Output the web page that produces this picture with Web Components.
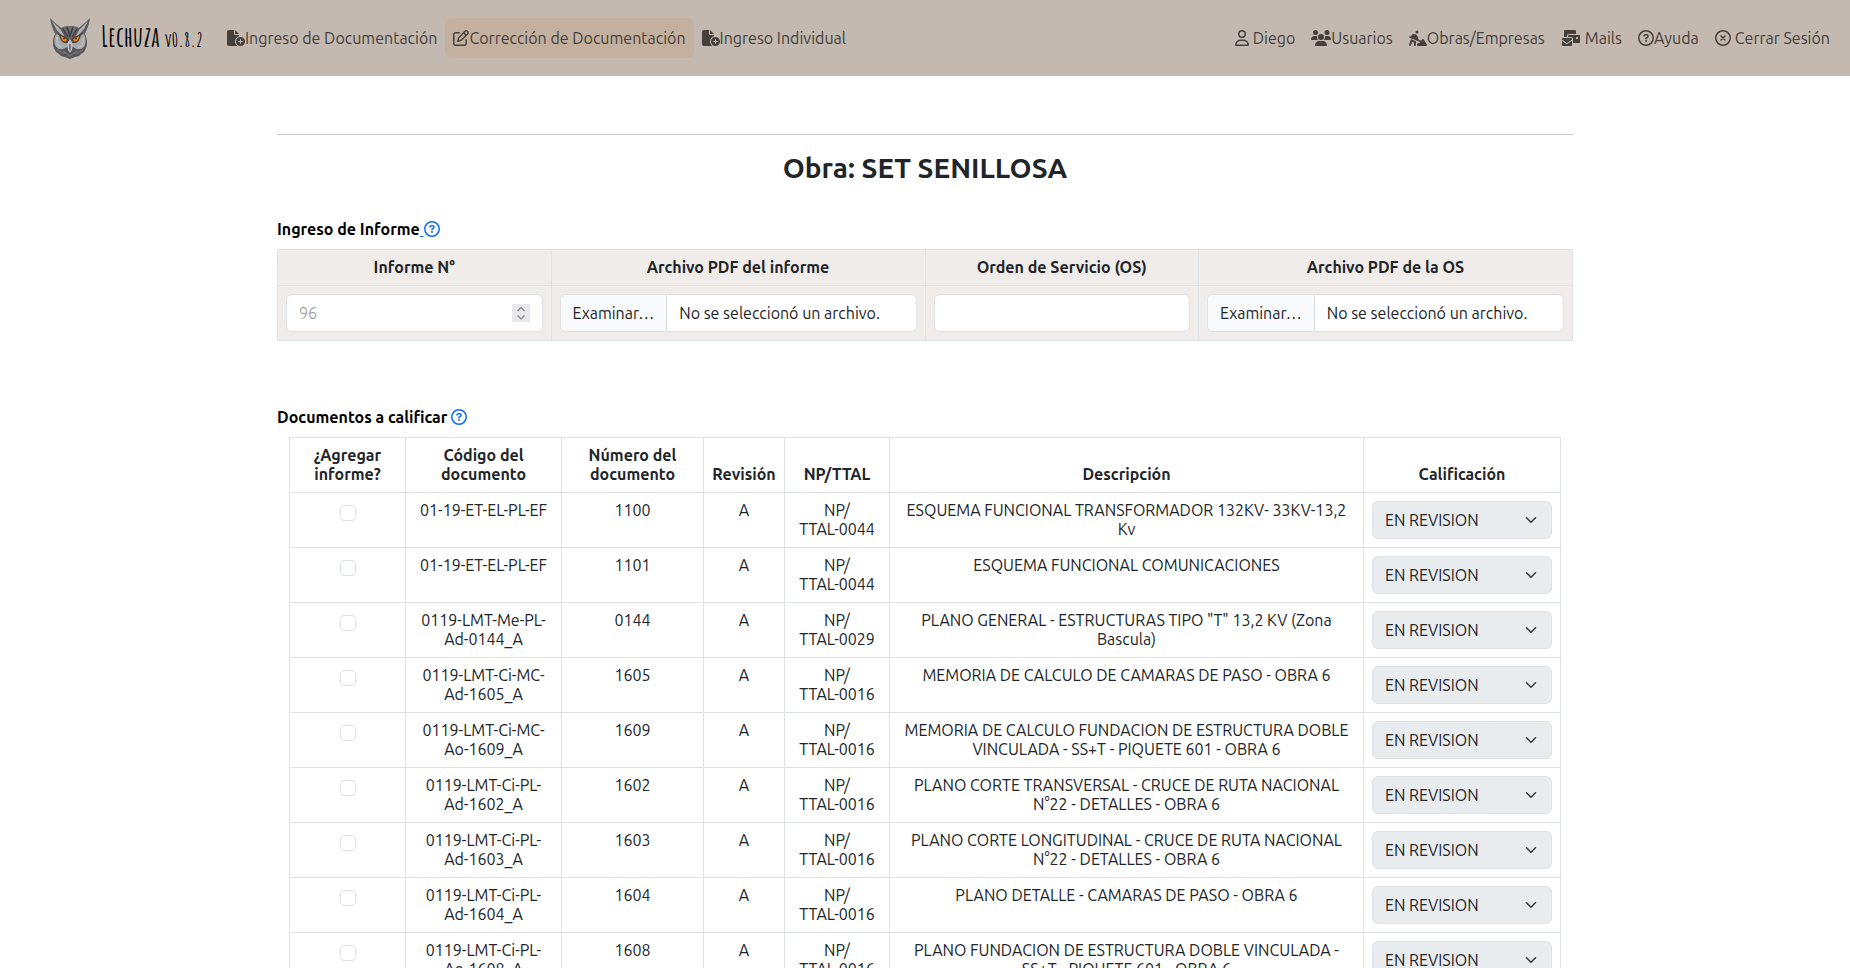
<!DOCTYPE html>
<html lang="es">
<head>
<meta charset="utf-8">
<meta name="viewport" content="width=device-width, initial-scale=1">
<title>Lechuza</title>
<style>
  body { margin: 0; background: #fff; color: #212529; font: 16px/24px Ubuntu, "Noto Sans", sans-serif; }
</style>
</head>
<body>
<lechuza-app></lechuza-app>
<script>
const ICONS = {
  fileplus: [576, 512, '<path d="M0 64C0 28.7 28.7 0 64 0H224V128c0 17.7 14.3 32 32 32H384v38.6C310.1 219.5 256 287.4 256 368c0 59.1 29.1 111.3 73.7 143.3c-3.2 .5-6.4 .7-9.7 .7H64c-35.3 0-64-28.7-64-64V64zm384 64H256V0L384 128zm48 96a144 144 0 1 1 0 288 144 144 0 1 1 0-288zm16 80c0-8.8-7.2-16-16-16s-16 7.2-16 16v48H368c-8.8 0-16 7.2-16 16s7.2 16 16 16h48v48c0 8.8 7.2 16 16 16s16-7.2 16-16V384h48c8.8 0 16-7.2 16-16s-7.2-16-16-16H448V304z"/>'],
  edit: [512, 512, '<path d="M441 58.9L453.1 71c9.4 9.4 9.4 24.6 0 33.9L424 134.1 377.9 88 407 58.9c9.4-9.4 24.6-9.4 33.9 0zM209.8 256.2L344 121.9 390.1 168 255.8 302.2c-2.9 2.9-6.5 5-10.4 6.1l-58.5 16.7 16.7-58.5c1.1-3.9 3.2-7.5 6.1-10.4zM373.1 25L175.8 222.2c-8.7 8.7-15 19.4-18.3 31.1l-28.6 100c-2.4 8.4-.1 17.4 6.1 23.6s15.2 8.5 23.6 6.1l100-28.6c11.8-3.4 22.5-9.7 31.1-18.3L487 138.9c28.1-28.1 28.1-73.7 0-101.8L474.9 25C446.8-3.1 401.2-3.1 373.1 25zM88 64C39.4 64 0 103.4 0 152V424c0 48.6 39.4 88 88 88H360c48.6 0 88-39.4 88-88V312c0-13.3-10.7-24-24-24s-24 10.7-24 24V424c0 22.1-17.9 40-40 40H88c-22.1 0-40-17.9-40-40V152c0-22.1 17.9-40 40-40H200c13.3 0 24-10.7 24-24s-10.7-24-24-24H88z"/>'],
  user: [448, 512, '<path d="M304 128a80 80 0 1 0 -160 0 80 80 0 1 0 160 0zM96 128a128 128 0 1 1 256 0A128 128 0 1 1 96 128zM49.3 464H398.7c-8.9-63.3-63.3-112-129-112H178.3c-65.7 0-120.1 48.7-129 112zM0 482.3C0 383.8 79.8 304 178.3 304h91.4C368.2 304 448 383.8 448 482.3c0 16.4-13.3 29.7-29.7 29.7H29.7C13.3 512 0 498.7 0 482.3z"/>'],
  users: [640, 512, '<path d="M144 0a80 80 0 1 1 0 160A80 80 0 1 1 144 0zM512 0a80 80 0 1 1 0 160A80 80 0 1 1 512 0zM0 298.7C0 239.8 47.8 192 106.7 192h42.7c15.9 0 31 3.5 44.6 9.7c-1.3 7.2-1.9 14.7-1.9 22.3c0 38.2 16.8 72.5 43.3 96c-.2 0-.4 0-.7 0H21.3C9.6 320 0 310.4 0 298.7zM405.3 320c-.2 0-.4 0-.7 0c26.6-23.5 43.3-57.8 43.3-96c0-7.6-.7-15-1.9-22.3c13.6-6.3 28.7-9.7 44.6-9.7h42.7C592.2 192 640 239.8 640 298.7c0 11.8-9.6 21.3-21.3 21.3H405.3zM224 224a96 96 0 1 1 192 0 96 96 0 1 1 -192 0zM128 485.3C128 411.7 187.7 352 261.3 352H378.7C452.3 352 512 411.7 512 485.3c0 14.7-11.9 26.7-26.7 26.7H154.7c-14.7 0-26.7-11.9-26.7-26.7z"/>'],
  digging: [576, 512, '<path d="M208 64a48 48 0 1 1 96 0 48 48 0 1 1 -96 0zM9.8 214.8c5.1-12.2 19.1-18 31.4-12.9L60.7 210l22.9-38.1C99.9 144.6 129.3 128 161 128c51.4 0 97 32.9 113.3 81.7l34.6 103.7 79.3 33.1 34.2-45.6c6.4-8.5 16.6-13.3 27.2-12.8s20.3 6.4 25.8 15.5l96 160c5.9 9.9 6.1 22.2 .4 32.2s-16.3 16.2-27.8 16.2H288c-11.1 0-21.4-5.7-27.2-15.2s-6.4-21.2-1.4-31.1l16-32c5.4-10.8 16.5-17.7 28.6-17.7h32l22.5-30L22.8 246.2c-12.2-5.1-18-19.1-12.9-31.4zm82.8 91.8l112 48c11.8 5 19.4 16.6 19.4 29.4v96c0 17.7-14.3 32-32 32s-32-14.3-32-32V405.1l-60.6-26-37 111c-5.6 16.8-23.7 25.8-40.5 20.2S-3.9 486.6 1.6 469.9l48-144 11-33 32 13.7z"/>'],
  mails: [640, 512, '<path d="M128 0C110.3 0 96 14.3 96 32V224h96V192c0-35.3 28.7-64 64-64H480V32c0-17.7-14.3-32-32-32H128zM256 160c-17.7 0-32 14.3-32 32v32h96c35.3 0 64 28.7 64 64V416H576c17.7 0 32-14.3 32-32V192c0-17.7-14.3-32-32-32H256zm240 64h32c8.8 0 16 7.2 16 16v32c0 8.8-7.2 16-16 16H496c-8.8 0-16-7.2-16-16V240c0-8.8 7.2-16 16-16zM64 256c-17.7 0-32 14.3-32 32v13L187.1 415.9c1.4 1 3.1 1.6 4.9 1.6s3.5-.6 4.9-1.6L352 301V288c0-17.7-14.3-32-32-32H64zm288 84.8L216 441.6c-6.9 5.1-15.3 7.9-24 7.9s-17-2.8-24-7.9L32 340.8V480c0 17.7 14.3 32 32 32H320c17.7 0 32-14.3 32-32V340.8z"/>'],
  question: [512, 512, '<g fill="none" stroke="currentColor" stroke-width="48" stroke-linecap="round" stroke-linejoin="round"><circle cx="256" cy="256" r="232"/><path d="M192 188c5-24 20-36 44-36h38c27 0 48 20 48 46 0 18-9 32-24 41l-42 25v18"/></g><circle cx="256" cy="352" r="32"/>'],
  close: [512, 512, '<g fill="none" stroke="currentColor" stroke-width="48" stroke-linecap="round"><circle cx="256" cy="256" r="232"/><path d="M192 192l128 128M320 192L192 320"/></g>'],
};
const icon = (name) => {
  const [w, h, body] = ICONS[name];
  return `<svg class="icon" viewBox="0 0 ${w} ${h}" width="${w / 32}" height="16" fill="currentColor" aria-hidden="true">${body}</svg>`;
};

class BaseElement extends HTMLElement {
  connectedCallback() {
    if (this.shadowRoot) return;
    this.attachShadow({ mode: 'open' }).innerHTML = this.render();
  }
}

customElements.define('owl-logo', class extends BaseElement {
  render() {
    return `<style>:host{display:block;width:42px;height:42px}svg{display:block;width:100%;height:100%}</style>
    <svg viewBox="0 0 42 42" aria-hidden="true">
      <path d="M21 9C11 9 5 15 4 24c0 3 0 5 1 7l2 4 3 2 2 2 4 1 5 2 5-2 4-1 2-2 3-2 2-4c1-2 1-4 1-7C37 15 31 9 21 9z" fill="#555557"/>
      <path d="M1 1c1 7 3 12 6 17l9 4-1-9C10 9 6 6 1 1zM41 1c-1 7-3 12-6 17l-9 4 1-9c5-4 9-7 14-12z" fill="#5c5c5e"/>
      <path d="M3 4l4 8 10 11-5-10zM39 4l-4 8-10 11 5-10z" fill="#b4b4b6"/>
      <path d="M14 10l7-1 7 1-3 9-4 5-4-5z" fill="#6b6b6d"/>
      <path d="M18 10l3 9 3-9M14 12l5 8M28 12l-5 8" stroke="#3e3e40" stroke-width="1.400" fill="none"/>
      <path d="M7 17c-3 6-2 13 3 15 4 1 9-1 10-6l-3-5zM35 17c3 6 2 13-3 15-4 1-9-1-10-6l3-5z" fill="#a9a9ac"/>
      <path d="M8 20c-1 6 1 10 5 10M34 20c1 6-1 10-5 10" stroke="#bebec0" stroke-width="1.500" fill="none"/>
      <path d="M9 16l11 6-1 4c-4 1-7-1-8-5zM33 16l-11 6 1 4c4 1 7-1 8-5z" fill="#4a4644"/>
      <path d="M12 19l6 3.500-1 2c-3 0-5-2-5-5.500zM30 19l-6 3.500 1 2c3 0 5-2 5-5.500z" fill="#f5810f"/>
      <circle cx="15" cy="21.500" r="1" fill="#7a3400"/><circle cx="27" cy="21.500" r="1" fill="#7a3400"/>
      <path d="M21 22l3 5-1 6-2 3-2-3-1-6z" fill="#c2c2c4"/><path d="M20 27h2v5l-1 2-1-2z" fill="#77777a"/>
      <path d="M8 33l6 3 5 1M34 33l-6 3-5 1M14 34l7 5 7-5" stroke="#77777a" stroke-width="1.200" fill="none"/>
    </svg>`;
  }
});

customElements.define('nav-item', class extends BaseElement {
  render() {
    const gap = this.hasAttribute('spaced') ? 4 : 0;
    return `<style>
      :host{display:block}
      a{display:flex;align-items:center;gap:${gap}px;padding:8px;border-radius:6px;color:#45403c;text-decoration:none;line-height:24px;white-space:nowrap}
      :host([active]) a{background:#c4b09f}
      svg{display:block;flex:none}
    </style><a href="#"${this.hasAttribute('active') ? ' aria-current="page"' : ''}>${icon(this.getAttribute('icon'))}<slot></slot></a>`;
  }
});

customElements.define('app-navbar', class extends BaseElement {
  render() {
    return `<style>
      :host{display:block;background:#c3b9b0}
      nav{display:flex;align-items:center;min-height:76px;padding:0 12px 0 49px;box-sizing:border-box}
      .brand{display:flex;align-items:center;gap:10px;margin-right:16px;color:#000;text-decoration:none;white-space:nowrap}
      .name{font:700 28px/40px "Amatic SC","Liberation Sans Narrow",sans-serif}
      .name small{font-size:20px}
      .group{display:flex}
      .end{margin-left:auto}
    </style>
    <nav>
      <a class="brand" href="#"><owl-logo></owl-logo><span class="name">Lechuza <small>v0.8.2</small></span></a>
      <div class="group">
        <nav-item icon="fileplus">Ingreso de Documentación</nav-item>
        <nav-item icon="edit" active>Corrección de Documentación</nav-item>
        <nav-item icon="fileplus">Ingreso Individual</nav-item>
      </div>
      <div class="group end">
        <nav-item icon="user" spaced>Diego</nav-item>
        <nav-item icon="users">Usuarios</nav-item>
        <nav-item icon="digging">Obras/Empresas</nav-item>
        <nav-item icon="mails" spaced>Mails</nav-item>
        <nav-item icon="question">Ayuda</nav-item>
        <nav-item icon="close" spaced>Cerrar Sesión</nav-item>
      </div>
    </nav>`;
  }
});

customElements.define('section-title', class extends BaseElement {
  render() {
    const lead = this.hasAttribute('underlined');
    return `<style>
      :host{display:block;color:#000}
      h2{margin:0;font-size:16px;line-height:24px;font-weight:700}
      a{color:#0d6efd;text-decoration:${lead ? 'underline' : 'none'}}
      svg{vertical-align:-2px}
    </style>
    <h2><slot></slot><a href="#" aria-label="Ayuda">&nbsp;${icon('question')}</a></h2>`;
  }
});

const FIELD = `box-sizing:border-box;width:100%;height:38px;border:1px solid #dee2e6;border-radius:6px;background:#fff;color:#212529;line-height:24px`;

customElements.define('text-field', class extends BaseElement {
  render() {
    const number = this.getAttribute('type') === 'number';
    return `<style>
      :host{display:block}
      .box{display:flex;align-items:center;padding:0 12px;${FIELD}}
      input{flex:1;min-width:0;border:0;outline:0;padding:0;background:none;color:inherit;font:inherit;appearance:textfield}
      input::-webkit-inner-spin-button{appearance:none;margin:0}
      input::placeholder{color:#999;font-weight:300;opacity:1}
      svg{flex:none;background:#e9e9ed}
    </style>
    <div class="box"><input type="${number ? 'number' : 'text'}" aria-label="${this.getAttribute('label')}" placeholder="${this.getAttribute('placeholder') || ''}">
    ${number ? '<svg width="18" height="18" viewBox="0 0 18 18" fill="none" stroke="#8f8f9d" stroke-width="1.500" aria-hidden="true"><path d="M5.500 7L9 3.500 12.500 7M5.500 11.500L9 15l3.500-3.500"/></svg>' : ''}</div>`;
  }
});

customElements.define('file-field', class extends BaseElement {
  render() {
    return `<style>
      :host{display:block}
      label{display:flex;overflow:hidden;position:relative;white-space:nowrap;${FIELD}}
      input{position:absolute;inset:0;opacity:0}
      .pick{padding:6px 12px;background:#f8f9fa;border-right:1px solid #dee2e6}
      .file{padding:6px 12px}
    </style>
    <label><input type="file" accept="application/pdf" aria-label="${this.getAttribute('label')}"><span class="pick">Examinar…</span><span class="file">No se seleccionó un archivo.</span></label>`;
  }
});

customElements.define('grade-select', class extends BaseElement {
  render() {
    return `<style>
      :host{display:block}
      select{display:block;${FIELD};padding:0 36px 0 12px;appearance:none;font:inherit;line-height:24px;opacity:1;
        background:#e9ecef url("data:image/svg+xml,%3Csvg xmlns='http://www.w3.org/2000/svg' viewBox='0 0 16 16'%3E%3Cpath fill='none' stroke='%23343a40' stroke-linecap='round' stroke-linejoin='round' stroke-width='2' d='m2 5 6 6 6-6'/%3E%3C/svg%3E") no-repeat right 12px center/16px 12px}
    </style>
    <select aria-label="Calificación ${this.getAttribute('doc')}"><option>EN REVISION</option></select>`;
  }
});

const TABLE = `:host{display:block}
  table{width:100%;border-collapse:collapse;table-layout:fixed;line-height:19px;text-align:center}
  th,td{border:1px solid #dee2e6;padding:8px;vertical-align:top}
  th{font-weight:700;vertical-align:bottom}`;

customElements.define('report-table', class extends BaseElement {
  render() {
    return `<style>${TABLE}
      table{background:#f0ecea}
      .file{width:374px}
    </style>
    <table>
      <colgroup><col><col class="file"><col><col class="file"></colgroup>
      <thead><tr><th>Informe N°</th><th>Archivo PDF del informe</th><th>Orden de Servicio (OS)</th><th>Archivo PDF de la OS</th></tr></thead>
      <tbody><tr>
        <td><text-field type="number" placeholder="96" label="Informe N°"></text-field></td>
        <td><file-field label="Archivo PDF del informe"></file-field></td>
        <td><text-field label="Orden de Servicio (OS)"></text-field></td>
        <td><file-field label="Archivo PDF de la OS"></file-field></td>
      </tr></tbody>
    </table>`;
  }
});

const DOCS = [
  ['01-19-ET-EL-PL-EF', '1100', '0044', 'ESQUEMA FUNCIONAL TRANSFORMADOR 132KV- 33KV-13,2<br>Kv'],
  ['01-19-ET-EL-PL-EF', '1101', '0044', 'ESQUEMA FUNCIONAL COMUNICACIONES'],
  ['0119-LMT-Me-PL-<br>Ad-0144_A', '0144', '0029', 'PLANO GENERAL - ESTRUCTURAS TIPO "T" 13,2 KV (Zona<br>Bascula)'],
  ['0119-LMT-Ci-MC-<br>Ad-1605_A', '1605', '0016', 'MEMORIA DE CALCULO DE CAMARAS DE PASO - OBRA 6'],
  ['0119-LMT-Ci-MC-<br>Ao-1609_A', '1609', '0016', 'MEMORIA DE CALCULO FUNDACION DE ESTRUCTURA DOBLE<br>VINCULADA - SS+T - PIQUETE 601 - OBRA 6'],
  ['0119-LMT-Ci-PL-<br>Ad-1602_A', '1602', '0016', 'PLANO CORTE TRANSVERSAL - CRUCE DE RUTA NACIONAL<br>N°22 - DETALLES - OBRA 6'],
  ['0119-LMT-Ci-PL-<br>Ad-1603_A', '1603', '0016', 'PLANO CORTE LONGITUDINAL - CRUCE DE RUTA NACIONAL<br>N°22 - DETALLES - OBRA 6'],
  ['0119-LMT-Ci-PL-<br>Ad-1604_A', '1604', '0016', 'PLANO DETALLE - CAMARAS DE PASO - OBRA 6'],
  ['0119-LMT-Ci-PL-<br>Ao-1608_A', '1608', '0016', 'PLANO FUNDACION DE ESTRUCTURA DOBLE VINCULADA -<br>SS+T - PIQUETE 601 - OBRA 6'],
];

customElements.define('documents-table', class extends BaseElement {
  render() {
    const rows = DOCS.map(([code, num, np, text]) => `<tr>
      <td><input type="checkbox" aria-label="Agregar informe a ${num}"></td>
      <td>${code}</td><td>${num}</td><td>A</td><td>NP/<br>TTAL-${np}</td><td>${text}</td>
      <td><grade-select doc="${num}"></grade-select></td></tr>`).join('');
    return `<style>${TABLE}
      th,td{padding:8px 4px}
      td:last-child{padding:8px}
      input{display:block;appearance:none;box-sizing:border-box;width:16px;height:16px;margin:4px auto 0;border:1px solid #dee2e6;border-radius:4px;background:#fff}
      input:checked{background:#0d6efd;border-color:#0d6efd}
    </style>
    <table>
      <colgroup><col style="width:116px"><col style="width:156px"><col style="width:142px"><col style="width:81px"><col style="width:105px"><col><col style="width:197px"></colgroup>
      <thead><tr><th>¿Agregar<br>informe?</th><th>Código del<br>documento</th><th>Número del<br>documento</th><th>Revisión</th><th>NP/TTAL</th><th>Descripción</th><th>Calificación</th></tr></thead>
      <tbody>${rows}</tbody>
    </table>`;
  }
});

customElements.define('lechuza-app', class extends BaseElement {
  render() {
    return `<style>
      :host{display:block}
      main{max-width:1296px;margin:0 auto;padding:58px 12px 48px}
      hr{margin:0;border:0;border-top:1px solid #c8c9ca}
      h1{margin:16px 0 32px;font-size:28px;line-height:34px;font-weight:700;text-align:center}
      report-table{margin:8px 0 64px}
      documents-table{margin:8px 12px 0}
    </style>
    <app-navbar></app-navbar>
    <main>
      <hr>
      <h1>Obra: SET SENILLOSA</h1>
      <section-title underlined>Ingreso de Informe</section-title>
      <report-table></report-table>
      <section-title>Documentos a calificar</section-title>
      <documents-table></documents-table>
    </main>`;
  }
});
</script>
</body>
</html>
